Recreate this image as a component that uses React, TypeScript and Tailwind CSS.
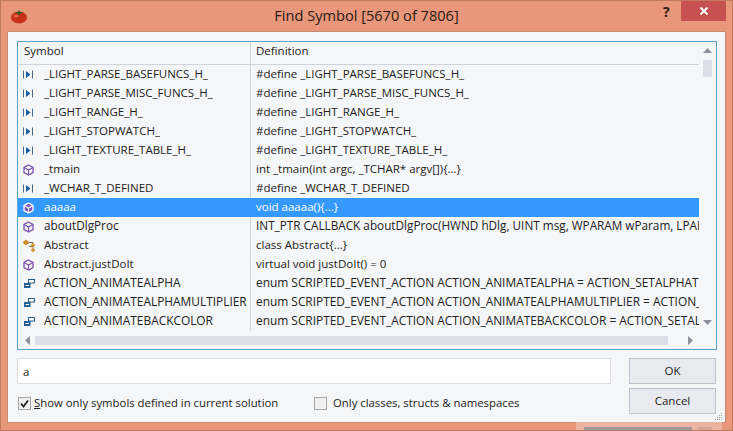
import React from 'react';

const FONT = "font-['Open_Sans','Noto_Sans',sans-serif]";

type Kind = 'macro' | 'func' | 'cls' | 'enum';

// enum rows and the long signature run a little wider in the reference
const rows: { kind: Kind; name: string; def: string; sel?: boolean; size?: string }[] = [
  { kind: 'macro', name: '_LIGHT_PARSE_BASEFUNCS_H_', def: '#define _LIGHT_PARSE_BASEFUNCS_H_' },
  { kind: 'macro', name: '_LIGHT_PARSE_MISC_FUNCS_H_', def: '#define _LIGHT_PARSE_MISC_FUNCS_H_' },
  { kind: 'macro', name: '_LIGHT_RANGE_H_', def: '#define _LIGHT_RANGE_H_' },
  { kind: 'macro', name: '_LIGHT_STOPWATCH_', def: '#define _LIGHT_STOPWATCH_' },
  { kind: 'macro', name: '_LIGHT_TEXTURE_TABLE_H_', def: '#define _LIGHT_TEXTURE_TABLE_H_' },
  { kind: 'func', name: '_tmain', def: 'int _tmain(int argc, _TCHAR* argv[]){...}' },
  { kind: 'macro', name: '_WCHAR_T_DEFINED', def: '#define _WCHAR_T_DEFINED' },
  { kind: 'func', name: 'aaaaa', def: 'void aaaaa(){...}', sel: true },
  { kind: 'func', name: 'aboutDlgProc', def: 'INT_PTR CALLBACK aboutDlgProc(HWND hDlg, UINT msg, WPARAM wParam, LPARAM lParam)', size: 'text-[11.75px]' },
  { kind: 'cls', name: 'Abstract', def: 'class Abstract{...}' },
  { kind: 'func', name: 'Abstract.justDoIt', def: 'virtual void justDoIt() = 0' },
  { kind: 'enum', name: 'ACTION_ANIMATEALPHA', def: 'enum SCRIPTED_EVENT_ACTION ACTION_ANIMATEALPHA = ACTION_SETALPHATRANSITION', size: 'text-[11.9px]' },
  { kind: 'enum', name: 'ACTION_ANIMATEALPHAMULTIPLIER', def: 'enum SCRIPTED_EVENT_ACTION ACTION_ANIMATEALPHAMULTIPLIER = ACTION_SETALPHA', size: 'text-[11.9px]' },
  { kind: 'enum', name: 'ACTION_ANIMATEBACKCOLOR', def: 'enum SCRIPTED_EVENT_ACTION ACTION_ANIMATEBACKCOLOR = ACTION_SETALPHA', size: 'text-[11.9px]' },
];

const Icon: React.FC<{ kind: Kind; sel?: boolean }> = ({ kind, sel }) => {
  if (kind === 'macro') {
    return (
      <svg className="ml-[1px]" width="11" height="9" viewBox="0 0 11 9">
        <rect x="0" y="0.5" width="1" height="8" fill="#4a6688" />
        <path d="M3 1 L7.5 4.5 L3 8 Z" fill="#1a5fa8" />
        <rect x="9" y="0.5" width="1" height="8" fill="#4a6688" />
      </svg>
    );
  }
  if (kind === 'func') {
    const c = sel ? '#ffffff' : '#7a4fb0';
    return (
      <svg className="ml-[1px]" width="11" height="12" viewBox="0 0 11 12">
        <path d="M5.5 1 L10 3.5 V8.5 L5.5 11 L1 8.5 V3.5 Z" fill={sel ? '#7d55b8' : 'none'} stroke={c} strokeWidth="1.3" />
        <path d="M1.5 3.8 L5.5 6 L9.5 3.8 M5.5 6 V10.5" fill="none" stroke={c} strokeWidth="1.1" />
      </svg>
    );
  }
  if (kind === 'cls') {
    return (
      <svg width="15" height="14" viewBox="0 0 15 14">
        <path d="M4 0.5 L7.5 3.5 L4 6.5 L0.5 3.5 Z" fill="#c98a2b" />
        <path d="M7 3.5 H11 V11 M7 7.5 H11" fill="none" stroke="#8a6a30" strokeWidth="1" />
        <path d="M11 4 L13.5 6 L11 8 L8.5 6 Z" fill="#d39a3c" />
        <path d="M11 9 L13.5 11 L11 13.5 L8.5 11 Z" fill="#d39a3c" />
      </svg>
    );
  }
  return (
    <svg className="ml-[2px]" width="11" height="9" viewBox="0 0 11 9">
      <rect x="4.5" y="0.5" width="6" height="3.5" fill="#fff" stroke="#1f5f96" />
      <rect x="0" y="4" width="6.5" height="5" fill="#1f5f96" />
      <rect x="1.5" y="6" width="3.5" height="1" fill="#fff" />
    </svg>
  );
};

const Check: React.FC<{ on?: boolean; label: React.ReactNode; className?: string }> = ({ on, label, className }) => (
  <div className={`flex items-center ${className ?? ''}`}>
    <div className="w-[13px] h-[13px] border border-[#a6a6a6] bg-[#f0f0f0] flex items-center justify-center shrink-0">
      {on && (
        <svg width="11" height="11" viewBox="0 0 11 11">
          <path d="M2 5.5 L4.5 8.5 L9 2.5" fill="none" stroke="#222" strokeWidth="1.8" />
        </svg>
      )}
    </div>
    <span className="text-[11.35px] leading-[16px] text-[#222]">{label}</span>
  </div>
);

export default function App() {
  return (
    <div className={`w-[733px] h-[431px] bg-[#e8977a] border border-[#c07a60] flex flex-col overflow-hidden relative ${FONT}`}>
      {/* title bar */}
      <div className="h-[30px] shrink-0 flex items-center relative">
        <svg className="ml-[9px]" width="18" height="16" viewBox="0 0 18 16">
          <ellipse cx="9" cy="9.5" rx="8" ry="6" fill="#c9301c" />
          <ellipse cx="6" cy="8" rx="2.5" ry="1.5" fill="#e8604a" />
          <path d="M9 2 L10 4 L14 4.5 L10.5 5.5 L9 7.5 L7.5 5.5 L4 4.5 L8 4 Z" fill="#2f5a24" />
        </svg>
        <div className="flex-1 text-center text-[14.6px] text-[#2a1a14] pr-[27px]">Find Symbol [5670 of 7806]</div>
        <span className="absolute left-[662px] top-0 text-[14px] leading-[21px] font-bold text-[#2a1a14]">?</span>
        <div className="absolute left-[680px] top-0 w-[45px] h-[20px] bg-[#c75050] flex items-center justify-center">
          <svg width="10" height="10" viewBox="0 0 10 10">
            <path d="M1.5 1.5 L8.5 8.5 M8.5 1.5 L1.5 8.5" stroke="#fff" strokeWidth="2" />
          </svg>
        </div>
      </div>

      {/* client area */}
      <div className="ml-[6px] w-[719px] h-[392px] shrink-0 bg-[#f5f6f7] border border-[#c98a70] px-[9px] pt-[9px] flex flex-col relative">
        {/* list */}
        <div className="w-[700px] h-[309px] border border-[#5aa2c8] flex flex-col shrink-0 relative overflow-hidden">
          <div className="h-[23px] shrink-0 flex text-[11.5px] text-[#222] mr-[17px] border-b border-[#d0d4da]">
            <div className="w-[233px] pl-[6px] border-r border-[#d0d4da] leading-[18px]">Symbol</div>
            <div className="flex-1 pl-[5px] leading-[18px]">Definition</div>
          </div>
          <div className="flex-1 mr-[17px] min-h-0">
            {rows.map((r) => (
              <div key={r.name} className={`flex h-[19px] leading-[17px] ${r.size ?? 'text-[11.5px]'} ${r.sel ? 'bg-[#3399ff] text-white' : 'text-[#222]'}`}>
                <div className={`w-[233px] shrink-0 flex items-center border-r ${r.sel ? 'border-transparent' : 'border-[#d0d4da]'}`}>
                  <div className="w-[26px] pl-[4px] shrink-0 flex items-center"><Icon kind={r.kind} sel={r.sel} /></div>
                  <span className="whitespace-nowrap overflow-hidden pb-[2px]">{r.name}</span>
                </div>
                <div className="flex-1 pl-[5px] whitespace-nowrap overflow-hidden">{r.def}</div>
              </div>
            ))}
          </div>
          {/* vertical scrollbar */}
          <div className="absolute right-0 top-0 w-[17px] bottom-0 flex flex-col items-center">
            <svg className="mt-[6px]" width="9" height="5" viewBox="0 0 9 5"><path d="M4.5 0 L9 5 H0 Z" fill="#8f8f9e" /></svg>
            <div className="w-[9px] h-[17px] mt-[7px] bg-[#dcdde6]" />
            <div className="flex-1" />
            <svg className="mb-[24px]" width="9" height="5" viewBox="0 0 9 5"><path d="M0 0 H9 L4.5 5 Z" fill="#8f8f9e" /></svg>
          </div>
          {/* horizontal scrollbar */}
          <div className="absolute left-0 right-[17px] bottom-[4px] h-[9px] flex items-center">
            <svg className="ml-[7px]" width="5" height="9" viewBox="0 0 5 9"><path d="M5 0 V9 L0 4.5 Z" fill="#8f8f9e" /></svg>
            <div className="ml-[5px] w-[633px] h-[9px] bg-[#dcdde6]" />
            <svg className="ml-[20px]" width="5" height="9" viewBox="0 0 5 9"><path d="M0 0 L5 4.5 L0 9 Z" fill="#8f8f9e" /></svg>
          </div>
        </div>

        {/* search row and buttons */}
        <div className="flex mt-[8px]">
          <div className="w-[594px] shrink-0">
            <div className="h-[26px] border border-[#dcdde2] bg-white pl-[5px] text-[11.5px] leading-[25px] text-[#222]">a</div>
            <div className="flex mt-[11px]">
              <Check on className="w-[296px] ml-[1px] gap-[3px]" label={<><span className="underline">S</span>how only symbols defined in current solution</>} />
              <Check className="gap-[6px]" label="Only classes, structs & namespaces" />
            </div>
          </div>
          <div className="ml-[18px] w-[87px] flex flex-col gap-[4px]">
            <div className="h-[26px] bg-[#e9eaf0] border border-[#c2c3c9] text-center text-[11.5px] leading-[24px] text-[#222]">OK</div>
            <div className="h-[26px] bg-[#e9eaf0] border border-[#c2c3c9] text-center text-[11.5px] leading-[24px] text-[#222]">Cancel</div>
          </div>
        </div>

        {/* resize grip */}
        <svg className="absolute right-[2px] bottom-[1px]" width="8" height="8" viewBox="0 0 8 8">
          <path d="M6 0h1v1H6z M4 2h1v1H4z M6 2h1v1H6z M2 4h1v1H2z M4 4h1v1H4z M6 4h1v1H6z M0 6h1v1H0z M2 6h1v1H2z M4 6h1v1H4z M6 6h1v1H6z" fill="#a0a0a0" />
        </svg>
      </div>

      {/* ghost of the window behind, showing through the bottom frame */}
      <div className="absolute left-[575px] bottom-0 w-[146px] h-[8px] bg-[#edb3a0] flex items-end">
        <div className="ml-[8px] w-[108px] h-[3px] bg-[#9a9a9e]" />
        <div className="ml-[6px] w-[14px] h-[3px] bg-[#d9a594]" />
      </div>
    </div>
  );
}
